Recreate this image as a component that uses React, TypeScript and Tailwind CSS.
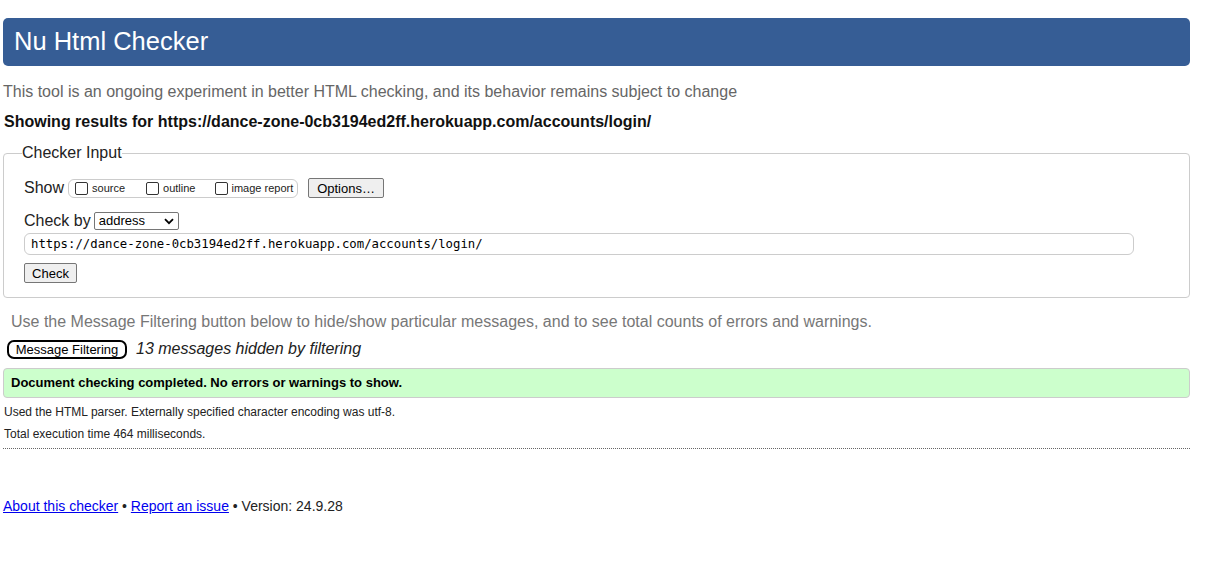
import React from "react";

export default function App() {
  const font = { fontFamily: '"Liberation Sans", Arial, sans-serif' };
  return (
    <div className="min-h-[564px] bg-white text-black" style={font}>
      <div className="pt-[18px] pl-[3px] pr-[29px]">
        <div className="h-[48px] rounded-[5px] bg-[#365d95] flex items-center pl-[11px]">
          <h1 className="text-[25.5px] leading-none text-white font-normal">Nu Html Checker</h1>
        </div>
        <p className="mt-[16px] text-[16px] leading-[20px] text-[#666666]">
          This tool is an ongoing experiment in better HTML checking, and its behavior remains subject to change
        </p>
        <p className="mt-[10px] pl-[1px] text-[16px] leading-[20px] font-bold text-[#111]">
          Showing results for https://dance-zone-0cb3194ed2ff.herokuapp.com/accounts/login/
        </p>

        <fieldset className="mt-[12px] border border-[#cccccc] rounded-[4px] px-[20px] pb-[14px]">
          <legend className="ml-[-2px] px-0 text-[16px] leading-[18px] text-[#222]">Checker Input</legend>
          <div className="mt-[16px] h-[20px] flex items-center">
            <span className="text-[16px] text-[#222]">Show</span>
            <div className="ml-[4px] h-[19px] w-[230px] border border-[#cccccc] rounded-[6px] flex items-center text-[11px] text-[#222]">
              <label className="flex items-center ml-[6px]">
                <span className="inline-block w-[13px] h-[13px] border border-[#333] rounded-[2px] bg-white" />
                <span className="ml-[4px]">source</span>
              </label>
              <label className="flex items-center ml-[21px]">
                <span className="inline-block w-[13px] h-[13px] border border-[#333] rounded-[2px] bg-white" />
                <span className="ml-[4px]">outline</span>
              </label>
              <label className="flex items-center ml-[20px]">
                <span className="inline-block w-[13px] h-[13px] border border-[#333] rounded-[2px] bg-white" />
                <span className="ml-[3px]">image report</span>
              </label>
            </div>
            <button className="ml-[10px] h-[20px] w-[76px] border border-[#767676] rounded-[2px] bg-[#efefef] text-[13px] text-black leading-none">
              Options…
            </button>
          </div>
          <div className="mt-[13px] h-[20px] flex items-center">
            <span className="text-[16px] text-[#222]">Check by</span>
            <div className="ml-[3px] h-[18px] w-[85px] border border-[#767676] rounded-[2px] bg-white flex items-center justify-between pl-[4px] pr-[4px] text-[13px] text-black">
              <span>address</span>
              <svg width="10" height="7" viewBox="0 0 10 7">
                <path d="M1 1.2 L5 5.2 L9 1.2" fill="none" stroke="#000" strokeWidth="1.8" />
              </svg>
            </div>
          </div>
          <div className="mt-[2px] h-[22px] w-[1110px] border border-[#cccccc] rounded-[6px] flex items-center pl-[6px]">
            <span className="text-[12.3px] text-black" style={{ fontFamily: '"DejaVu Sans Mono", "Liberation Mono", monospace' }}>
              https://dance-zone-0cb3194ed2ff.herokuapp.com/accounts/login/
            </span>
          </div>
          <button className="mt-[8px] h-[20px] w-[53px] border border-[#767676] rounded-[2px] bg-[#efefef] text-[13px] text-black leading-none block">
            Check
          </button>
        </fieldset>

        <p className="mt-[14px] pl-[8px] text-[16px] leading-[20px] text-[#777777]">
          Use the Message Filtering button below to hide/show particular messages, and to see total counts of errors and warnings.
        </p>
        <div className="mt-[8px] h-[18px] flex items-center pl-[4px]">
          <button className="h-[19px] w-[120px] border-2 border-black rounded-[7px] bg-white text-[13px] text-black leading-none">
            Message Filtering
          </button>
          <span className="ml-[9px] text-[16px] italic text-[#222]">13 messages hidden by filtering</span>
        </div>
        <div className="mt-[10px] h-[30px] border border-[#cccccc] rounded-[4px] bg-[#ccffcc] flex items-center pl-[7px]">
          <span className="text-[13px] font-bold text-black">Document checking completed. No errors or warnings to show.</span>
        </div>
        <p className="mt-[3px] pl-[1px] text-[12px] leading-[22px] text-[#222]">
          Used the HTML parser. Externally specified character encoding was utf-8.
        </p>
        <p className="pl-[1px] text-[12px] leading-[22px] text-[#222]">Total execution time 464 milliseconds.</p>
        <hr className="mt-[3px] border-0 border-t border-dotted border-[#666]" />
        <p className="mt-[47px] text-[14px] leading-[20px] text-[#222]">
          <a href="#" className="text-[#0000ee] underline">About this checker</a>
          {" • "}
          <a href="#" className="text-[#0000ee] underline">Report an issue</a>
          {" • Version: 24.9.28"}
        </p>
      </div>
    </div>
  );
}
